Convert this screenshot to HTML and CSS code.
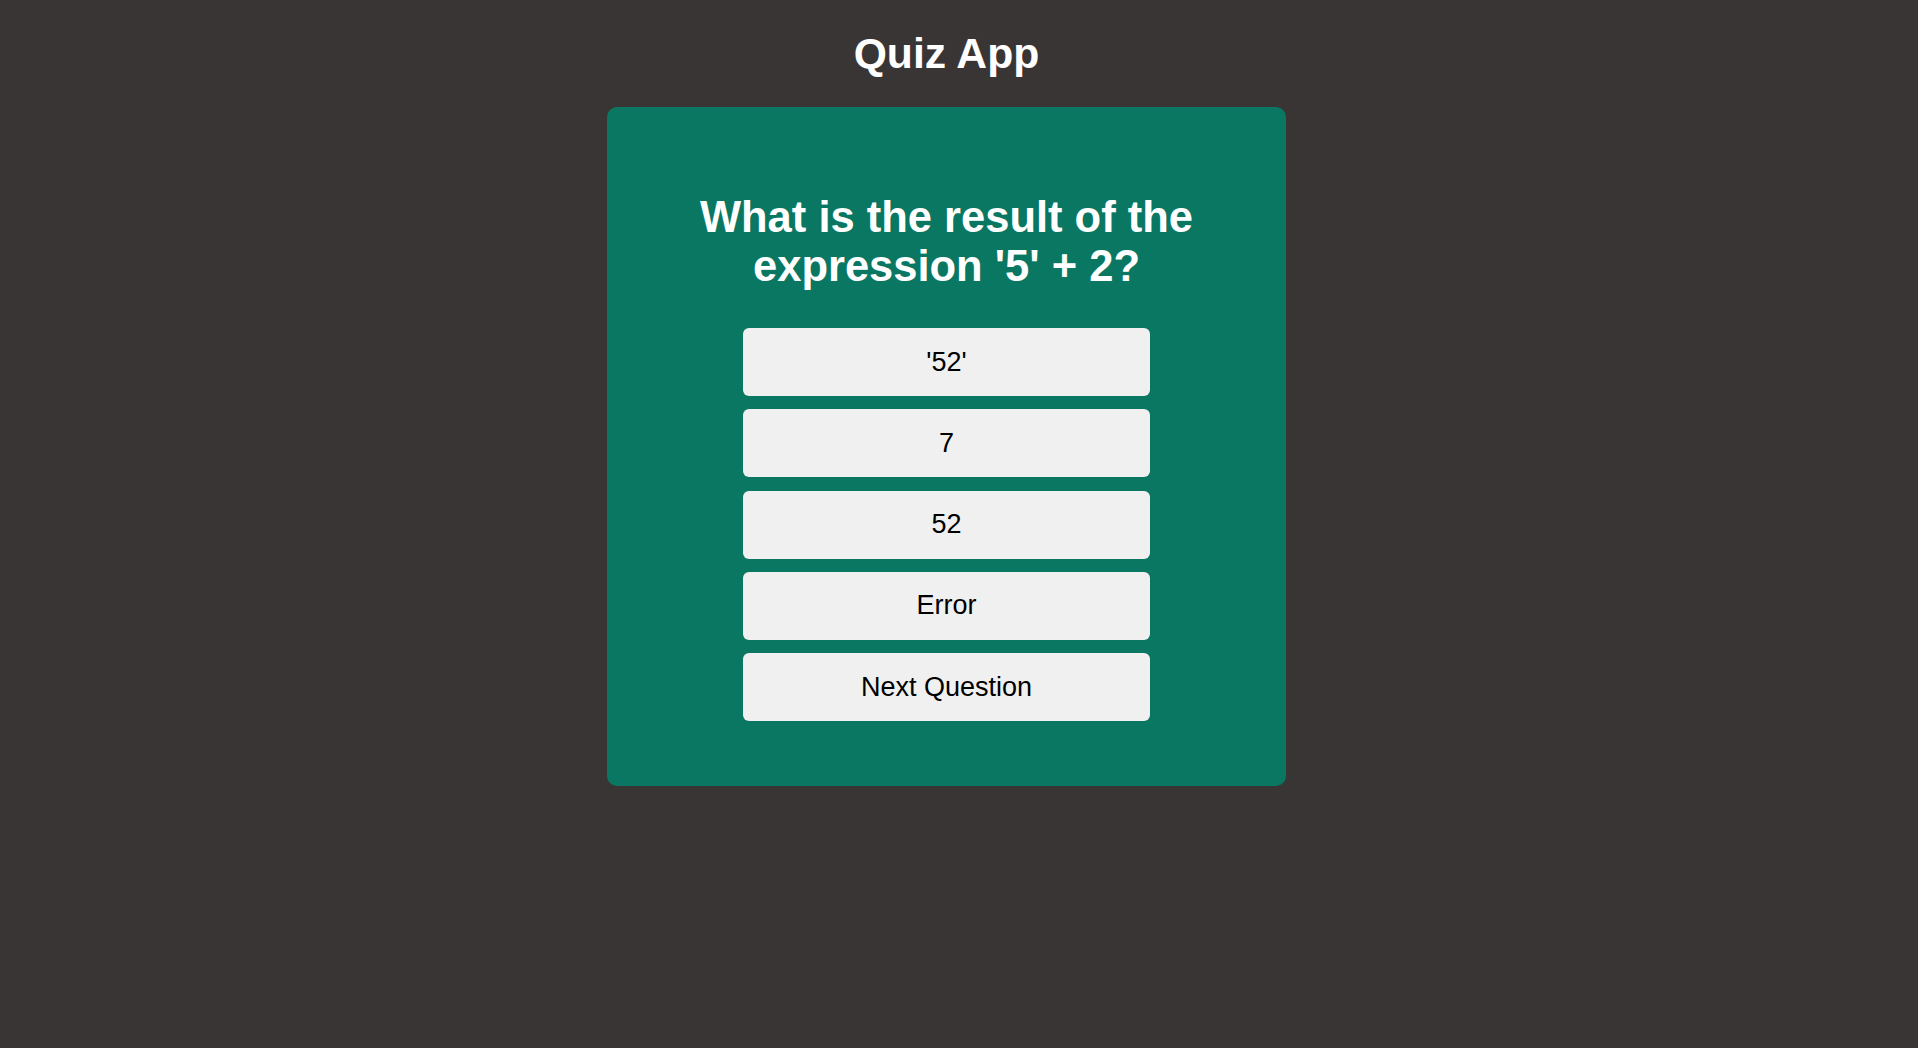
FILE: index.html
```html
<!DOCTYPE html>
<html lang="en">
<head>
<meta charset="utf-8">
<title>Quiz App</title>
<link rel="stylesheet" href="styles.css">
</head>
<body>
<div class="page">
  <h1 class="app-title">Quiz App</h1>
  <div class="quiz-card">
    <h2 class="question">What is the result of the expression '5' + 2?</h2>
    <div class="answers">
      <button class="btn">'52'</button>
      <button class="btn">7</button>
      <button class="btn">52</button>
      <button class="btn">Error</button>
      <button class="btn">Next Question</button>
    </div>
  </div>
</div>
</body>
</html>
```

FILE: styles.css
```css
html, body {
  margin: 0;
  padding: 0;
  background: #3a3535;
  height: 100%;
}

body {
  font-family: "Liberation Sans", Arial, sans-serif;
}

.page {
  display: flex;
  flex-direction: column;
  align-items: center;
  padding-right: 25px;
  padding-top: 29px;
}

.app-title {
  margin: 0 0 29px;
  font-size: 42.67px;
  line-height: 49px;
  font-weight: bold;
  color: #ffffff;
  text-align: center;
}

.quiz-card {
  box-sizing: border-box;
  width: 679px;
  height: 679px;
  background: #0a7763;
  border-radius: 10px;
  padding: 86px 40px 64px;
  display: flex;
  flex-direction: column;
  align-items: center;
}

.question {
  margin: 0 0 37px;
  font-size: 43.5px;
  line-height: 49px;
  font-weight: bold;
  color: #ffffff;
  text-align: center;
}

.answers {
  display: flex;
  flex-direction: column;
  gap: 13.3px;
  width: 407px;
}

.btn {
  box-sizing: border-box;
  height: 68px;
  width: 100%;
  border: none;
  border-radius: 6px;
  background: #f0f0f0;
  color: #000000;
  font-family: "Liberation Sans", Arial, sans-serif;
  font-size: 27px;
  display: flex;
  align-items: center;
  justify-content: center;
  padding: 0;
  cursor: pointer;
}
```
